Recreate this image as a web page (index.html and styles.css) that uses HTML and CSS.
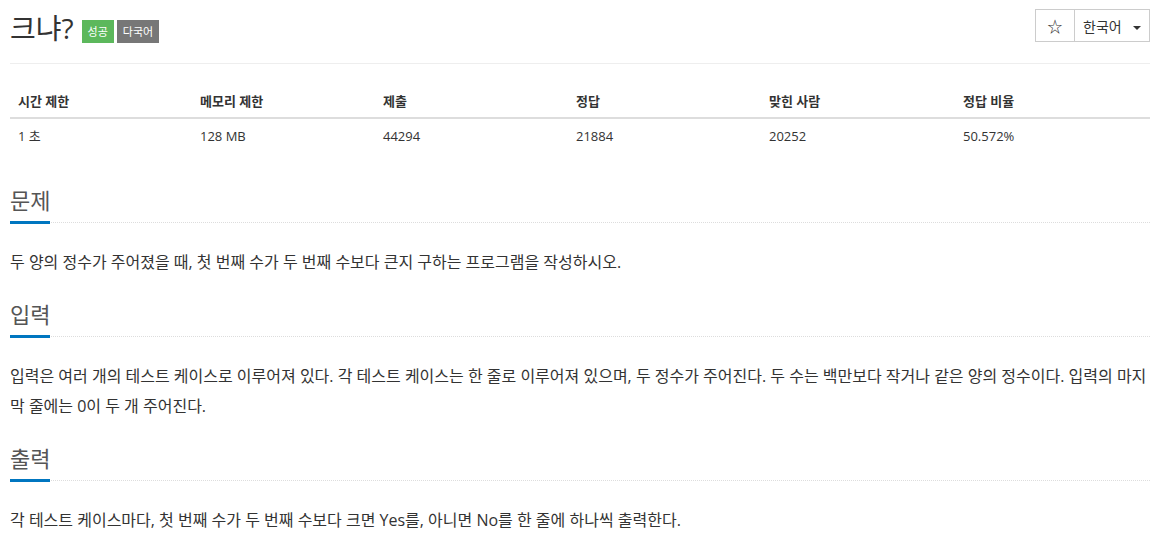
FILE: index.html
```html
<!DOCTYPE html>
<html lang="ko">
<head>
  <meta charset="UTF-8" />
  <title>크냐?</title>
  <link rel="stylesheet" href="styles.css">
</head>
<body>
  <div class="container">
    <div class="page-header">
      <div class="title-line">
        <span class="problem-title">크냐?</span>
        <span class="label label-success">성공</span>
        <span class="label label-default">다국어</span>
      </div>
      <div class="btn-group">
        <button class="btn btn-star">&#9734;</button>
        <button class="btn btn-lang">한국어 <span class="caret"></span></button>
      </div>
    </div>

    <table class="info-table">
      <thead>
        <tr>
          <th class="c1">시간 제한</th>
          <th class="c2">메모리 제한</th>
          <th class="c3">제출</th>
          <th class="c4">정답</th>
          <th class="c5">맞힌 사람</th>
          <th class="c6">정답 비율</th>
        </tr>
      </thead>
      <tbody>
        <tr>
          <td>1 초</td>
          <td>128 MB</td>
          <td>44294</td>
          <td>21884</td>
          <td>20252</td>
          <td>50.572%</td>
        </tr>
      </tbody>
    </table>

    <section class="problem-section">
      <div class="headline"><h2>문제</h2></div>
      <p>두 양의 정수가 주어졌을 때, 첫 번째 수가 두 번째 수보다 큰지 구하는 프로그램을 작성하시오.</p>
    </section>

    <section class="problem-section">
      <div class="headline"><h2>입력</h2></div>
      <p>입력은 여러 개의 테스트 케이스로 이루어져 있다. 각 테스트 케이스는 한 줄로 이루어져 있으며, 두 정수가 주어진다. 두 수는 백만보다 작거나 같은 양의 정수이다. 입력의 마지막 줄에는 0이 두 개 주어진다.</p>
    </section>

    <section class="problem-section">
      <div class="headline"><h2>출력</h2></div>
      <p>각 테스트 케이스마다, 첫 번째 수가 두 번째 수보다 크면 Yes를, 아니면 No를 한 줄에 하나씩 출력한다.</p>
    </section>
  </div>
</body>
</html>
```

FILE: styles.css
```css
* {
  box-sizing: border-box;
}

body {
  margin: 0;
  background: #fff;
  color: #333;
  font-family: "Open Sans", "Noto Sans CJK KR", sans-serif;
  font-size: 13px;
}

.container {
  width: 1160px;
  padding: 0 10px;
}

.page-header {
  display: flex;
  justify-content: space-between;
  align-items: flex-start;
  padding: 9px 0 18px;
  border-bottom: 1px solid #eee;
}

.title-line {
  display: flex;
  align-items: center;
  padding-top: 2px;
}

.problem-title {
  font-size: 28px;
  color: #333;
  line-height: 34px;
  margin-right: 8px;
}

.label {
  display: inline-block;
  color: #fff;
  font-size: 11px;
  line-height: 13px;
  padding: 5px 6px;
  margin-top: 7px;
  margin-right: 3px;
}

.label-success {
  background: #5cb85c;
}

.label-default {
  background: #777;
}

.btn-group {
  display: flex;
}

.btn {
  background: #fff;
  border: 1px solid #ccc;
  color: #333;
  font-family: "Open Sans", "Noto Sans CJK KR", sans-serif;
  font-size: 14px;
  height: 33px;
  padding: 0 10px;
  white-space: nowrap;
  cursor: pointer;
}

.btn-star {
  width: 40px;
  font-size: 15px;
  padding: 0;
}

.btn-lang {
  border-left: none;
  width: 75px;
  text-align: left;
  padding: 0 0 0 8px;
}

.caret {
  display: inline-block;
  width: 0;
  height: 0;
  margin-left: 8px;
  vertical-align: middle;
  border-top: 4px solid #333;
  border-left: 4px solid transparent;
  border-right: 4px solid transparent;
}

.info-table {
  width: 100%;
  border-collapse: collapse;
  margin-top: 19px;
}

.info-table th,
.info-table td {
  text-align: left;
  padding: 8px;
}

.info-table th {
  line-height: 20px;
  padding-bottom: 6px;
  font-weight: bold;
  border-bottom: 2px solid #ddd;
}

.info-table td {
  line-height: 18px;
}

.c1 { width: 182px; }
.c2 { width: 183px; }
.c3 { width: 193px; }
.c4 { width: 193px; }
.c5 { width: 194px; }
.c6 { width: 195px; }

.problem-section {
  margin-top: 20px;
}

.info-table + .problem-section {
  margin-top: 30px;
}

.headline {
  display: flex;
  border-bottom: 1px dotted #ddd;
  margin-bottom: 24px;
}

.headline h2 {
  margin: 0 0 -2px;
  font-size: 22px;
  font-weight: normal;
  color: #555;
  line-height: 34px;
  padding-bottom: 4px;
  border-bottom: 3px solid #0076c0;
}

.problem-section p {
  margin: 0;
  font-size: 16px;
  line-height: 30px;
  color: #333;
}
```
